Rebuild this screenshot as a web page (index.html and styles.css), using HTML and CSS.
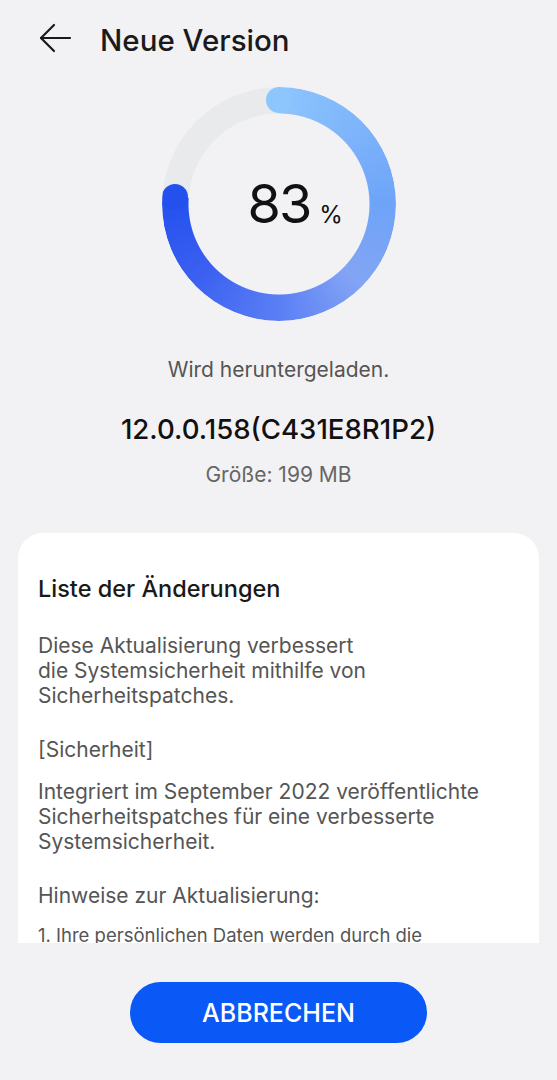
FILE: index.html
```html
<!DOCTYPE html>
<html lang="de">
<head>
    <meta charset="UTF-8">
    <meta name="viewport" content="width=device-width, initial-scale=1.0">
    <title>Neue Version</title>
    <link rel="stylesheet" href="styles.css">
</head>
<body>
    <div class="screen">
        <header class="top-bar">
            <svg class="back" width="34" height="30" viewBox="0 0 34 30" fill="none" stroke="#1a1a1a" stroke-width="2.2" stroke-linecap="round" stroke-linejoin="round">
                <path d="M32 15H3"/>
                <path d="M16 2L3 15l13 13"/>
            </svg>
            <h1>Neue Version</h1>
        </header>

        <section class="progress">
            <div class="ring">
                <div class="ring-track">
                    <div class="ring-fill"></div>
                    <span class="cap cap-start"></span>
                    <span class="cap cap-end"></span>
                </div>
                <div class="ring-label">
                    <span class="value">83</span>
                    <span class="unit">%</span>
                </div>
            </div>
            <p class="status">Wird heruntergeladen.</p>
            <p class="version">12.0.0.158(C431E8R1P2)</p>
            <p class="size">Größe: 199 MB</p>
        </section>

        <div class="card">
            <h2>Liste der Änderungen</h2>
            <p>Diese Aktualisierung verbessert<br>die Systemsicherheit mithilfe von<br>Sicherheitspatches.</p>
            <h3>[Sicherheit]</h3>
            <p>Integriert im September 2022 veröffentlichte<br>Sicherheitspatches für eine verbesserte<br>Systemsicherheit.</p>
            <h3>Hinweise zur Aktualisierung:</h3>
            <p class="note">1. Ihre persönlichen Daten werden durch die</p>
        </div>

        <div class="actions">
            <button type="button">ABBRECHEN</button>
        </div>
    </div>
</body>
</html>
```

FILE: styles.css
```css
/* General */
body {
    margin: 0;
    background: #f2f2f4;
    font-family: 'Inter', 'Noto Sans', sans-serif;
    color: #1a1a1a;
}

.screen {
    width: 557px;
    height: 1080px;
    display: flex;
    flex-direction: column;
}

/* Header */
.top-bar {
    display: flex;
    align-items: center;
    gap: 28px;
    height: 76px;
    padding-left: 38px;
}

.top-bar h1 {
    margin: 0;
    padding-top: 4px;
    font-size: 29.5px;
    font-weight: 500;
    color: #1a1a1a;
}

/* Progress ring */
.progress {
    display: flex;
    flex-direction: column;
    align-items: center;
    padding-top: 11px;
}

.ring {
    position: relative;
    width: 234px;
    height: 234px;
}

.ring-track {
    position: absolute;
    inset: 0;
    border-radius: 50%;
    background: #e9eaec;
    -webkit-mask: radial-gradient(circle, transparent 90px, #000 91px);
    mask: radial-gradient(circle, transparent 90px, #000 91px);
}

.ring-fill {
    position: absolute;
    inset: 0;
    border-radius: 50%;
    background: conic-gradient(#8dc5fd 0deg, #6ea4f8 90deg, #83a4f4 135deg, #5a7ff4 180deg, #3b60f1 228deg, #2450ee 274deg, transparent 274deg);
}

.cap {
    position: absolute;
    width: 26px;
    height: 26px;
    border-radius: 50%;
}

.cap-start {
    left: 104px;
    top: 0;
    background: #8dc5fd;
}

.cap-end {
    left: 0;
    top: 97px;
    background: #2450ee;
}

.ring-label {
    position: absolute;
    inset: 0;
    display: flex;
    align-items: baseline;
    gap: 9px;
    padding: 85px 0 0 86px;
    box-sizing: border-box;
}

.ring-label .value {
    font-size: 54px;
    line-height: 64px;
    letter-spacing: -2px;
    color: #111;
}

.ring-label .unit {
    font-size: 24px;
    color: #111;
}

.status {
    margin: 36px 0 0;
    font-size: 21px;
    line-height: 25px;
    color: #555;
}

.version {
    margin: 31px 0 0;
    font-size: 27.6px;
    line-height: 32px;
    font-weight: 500;
    color: #111;
}

.size {
    margin: 17px 0 0;
    font-size: 21px;
    line-height: 25px;
    color: #666;
}

/* Change log card */
.card {
    margin: 46px 18px 0;
    height: 410px;
    overflow: hidden;
    background: #fff;
    border-radius: 25px 25px 0 0;
    padding: 42px 20px 0;
    box-sizing: border-box;
}

.card h2 {
    margin: 0 0 30px;
    font-size: 23.5px;
    line-height: 28px;
    font-weight: 500;
    color: #191919;
}

.card h3 {
    margin: 0 0 17px;
    font-size: 21px;
    line-height: 25px;
    font-weight: 400;
    color: #555;
}

.card p {
    margin: 0 0 29px;
    font-size: 21px;
    line-height: 25px;
    color: #555;
}

.card p.note {
    margin: -2px 0 0;
    font-size: 18.5px;
}

/* Bottom button */
.actions {
    display: flex;
    justify-content: center;
    padding-top: 39px;
}

button {
    width: 297px;
    height: 61px;
    border: none;
    border-radius: 31px;
    background: #0a59f7;
    color: #fff;
    font-family: inherit;
    font-size: 25px;
    font-weight: 500;
}
```
